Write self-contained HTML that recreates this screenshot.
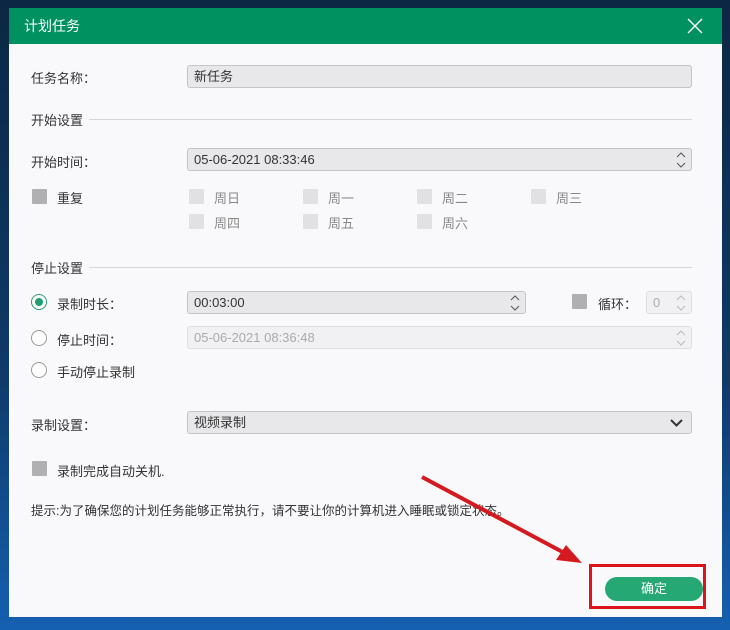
<!DOCTYPE html><html><head><meta charset="utf-8"><style>
*{box-sizing:border-box;margin:0;padding:0}
body{width:730px;height:630px;overflow:hidden;background:linear-gradient(180deg,#0c2744 0%,#0f3a6a 60%,#1560b0 100%);font-family:"Liberation Sans","Noto Sans CJK SC",sans-serif;font-size:13px;color:#333;position:relative}
.dlg{position:absolute;left:9px;top:8px;width:713px;height:609px;background:#f9f8fb}
.hd{height:36px;background:#009160;color:#fff;font-size:14px;line-height:36px;padding-left:15px;position:relative}
.a{position:absolute}
.lbl{position:absolute;left:22px}
.inp{position:absolute;left:178px;width:505px;height:23px;background:#e8e7ea;border:1px solid #c4c3c6;border-radius:3px;padding-left:6px;line-height:21px;font-size:13px}
.dis{background:#f1f0f3;color:#aaa;border-color:#dedde0}
.sp{position:absolute;right:5px;top:3px}
.sec{position:absolute;left:22px;right:30px;height:16px}
.sec span{background:#f9f8fb;padding-right:6px;position:relative}
.sec:before{content:"";position:absolute;left:0;right:0;top:9px;border-top:1px solid #d6d5d8}
.cb{position:absolute;width:15px;height:15px;background:#b0afb2;border-radius:1px}
.cbl{position:absolute;width:15px;height:15px;background:#e1e0e3;border-radius:1px}
.dl{position:absolute;color:#888}
.rd{position:absolute;left:22px;width:16px;height:16px;border:1px solid #999;border-radius:50%;background:#fff}
</style></head><body>
<div class="dlg">
<div class="hd">计划任务<svg class="a" style="right:19px;top:10px" width="16" height="16"><path d="M1 1L15 15M15 1L1 15" stroke="#fff" stroke-width="1.4"/></svg></div>
<div class="lbl" style="top:60px">任务名称：</div>
<div class="inp" style="top:57px">新任务</div>
<div class="sec" style="top:102px"><span>开始设置</span></div>
<div class="lbl" style="top:144px">开始时间：</div>
<div class="inp" style="top:140px">05-06-2021 08:33:46<svg class="sp" width="10" height="16"><path d="M1 5L5 1L9 5M1 11L5 15L9 11" stroke="#555" fill="none"/></svg></div>
<div class="cb" style="left:23px;top:181px"></div><div class="a" style="left:48px;top:180px">重复</div>
<div class="cbl" style="left:180px;top:181px"></div><div class="dl" style="left:205px;top:180px">周日</div>
<div class="cbl" style="left:294px;top:181px"></div><div class="dl" style="left:319px;top:180px">周一</div>
<div class="cbl" style="left:408px;top:181px"></div><div class="dl" style="left:433px;top:180px">周二</div>
<div class="cbl" style="left:522px;top:181px"></div><div class="dl" style="left:547px;top:180px">周三</div>
<div class="cbl" style="left:180px;top:206px"></div><div class="dl" style="left:205px;top:205px">周四</div>
<div class="cbl" style="left:294px;top:206px"></div><div class="dl" style="left:319px;top:205px">周五</div>
<div class="cbl" style="left:408px;top:206px"></div><div class="dl" style="left:433px;top:205px">周六</div>
<div class="sec" style="top:250px"><span>停止设置</span></div>
<div class="rd" style="top:286px;border-color:#2a9d70"><div style="position:absolute;left:3px;top:3px;width:8px;height:8px;border-radius:50%;background:#1fa070"></div></div>
<div class="a" style="left:48px;top:286px">录制时长：</div>
<div class="inp" style="top:283px;width:339px">00:03:00<svg class="sp" width="10" height="16"><path d="M1 5L5 1L9 5M1 11L5 15L9 11" stroke="#555" fill="none"/></svg></div>
<div class="cb" style="left:563px;top:286px"></div><div class="a" style="left:589px;top:286px">循环：</div>
<div class="inp dis" style="top:283px;left:637px;width:46px">0<svg class="sp" width="10" height="16"><path d="M1 5L5 1L9 5M1 11L5 15L9 11" stroke="#bbb" fill="none"/></svg></div>
<div class="rd" style="top:322px"></div><div class="a" style="left:48px;top:322px">停止时间：</div>
<div class="inp dis" style="top:318px">05-06-2021 08:36:48<svg class="sp" width="10" height="16"><path d="M1 5L5 1L9 5M1 11L5 15L9 11" stroke="#bbb" fill="none"/></svg></div>
<div class="rd" style="top:354px"></div><div class="a" style="left:48px;top:354px">手动停止录制</div>
<div class="lbl" style="top:407px">录制设置：</div>
<div class="inp" style="top:403px">视频录制<svg class="a" style="right:8px;top:7px" width="13" height="8"><path d="M1 1L6.5 6.5L12 1" stroke="#333" stroke-width="2" fill="none"/></svg></div>
<div class="cb" style="left:23px;top:453px"></div><div class="a" style="left:48px;top:453px">录制完成自动关机.</div>
<div class="lbl" style="top:492px;font-size:12.5px">提示:为了确保您的计划任务能够正常执行，请不要让你的计算机进入睡眠或锁定状态。</div>
<div class="a" style="left:596px;top:569px;width:98px;height:24px;border-radius:12px;background:#26a874;color:#fff;text-align:center;line-height:24px">确定</div>
</div>
<div class="a" style="left:589px;top:564px;width:117px;height:45px;border:3px solid #d9141a"></div>
<svg class="a" style="left:0;top:0" width="730" height="630"><path d="M422 477L570 556" stroke="#d41a1e" stroke-width="4"/><path d="M582 563L556 560L566 545Z" fill="#d41a1e"/></svg>
</body></html>
